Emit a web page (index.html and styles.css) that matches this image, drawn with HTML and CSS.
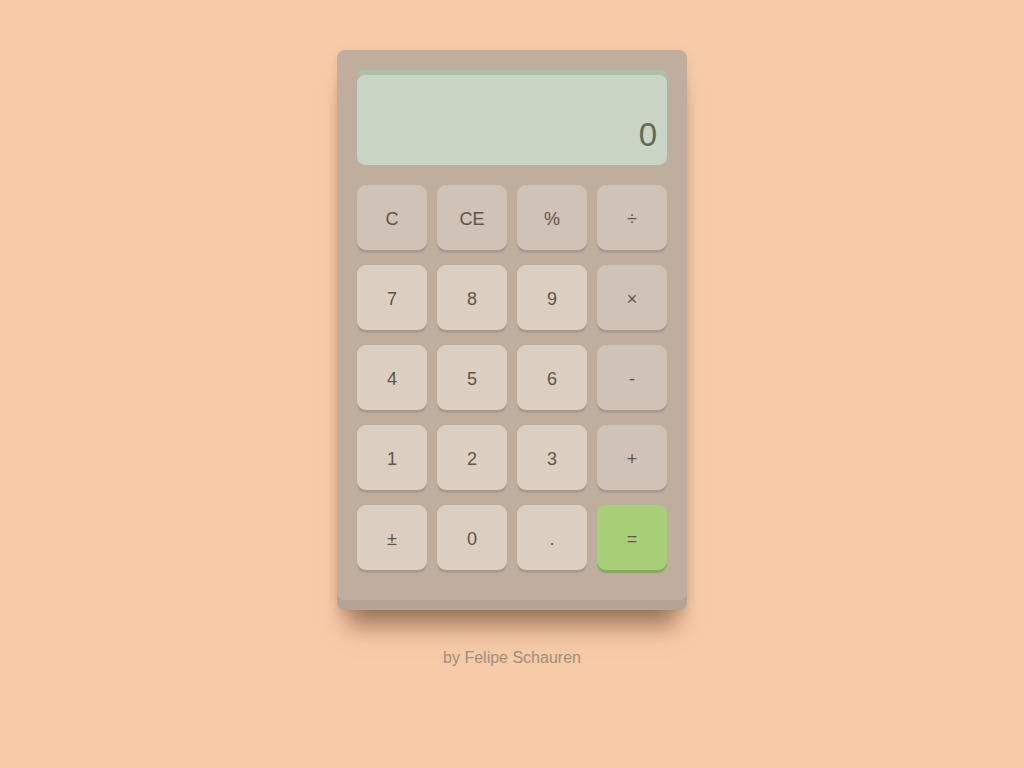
FILE: index.html
```html
<!DOCTYPE html>
<html lang="en">
<head>
<meta charset="utf-8">
<title>Calculator</title>
<link rel="stylesheet" href="styles.css">
</head>
<body>
<main class="page">
  <div class="calculator">
    <div class="display"><span class="display-value">0</span></div>
    <div class="keys">
      <button class="key op">C</button>
      <button class="key op">CE</button>
      <button class="key op">%</button>
      <button class="key op">÷</button>
      <button class="key">7</button>
      <button class="key">8</button>
      <button class="key">9</button>
      <button class="key op">×</button>
      <button class="key">4</button>
      <button class="key">5</button>
      <button class="key">6</button>
      <button class="key op">-</button>
      <button class="key">1</button>
      <button class="key">2</button>
      <button class="key">3</button>
      <button class="key op">+</button>
      <button class="key">±</button>
      <button class="key">0</button>
      <button class="key">.</button>
      <button class="key equals">=</button>
    </div>
  </div>
  <p class="credit">by Felipe Schauren</p>
</main>
</body>
</html>
```

FILE: styles.css
```css
html, body {
  margin: 0;
  padding: 0;
  background: #f7cba8;
  font-family: "Liberation Sans", Arial, sans-serif;
}

.page {
  display: flex;
  flex-direction: column;
  align-items: center;
  padding-top: 50px;
}

.calculator {
  width: 310px;
  padding: 20px 20px 40px;
  background: #bfae9e;
  border-radius: 8px;
  box-shadow: inset 0 -10px 0 rgba(90, 70, 50, 0.09), 0 26px 22px -10px rgba(105, 65, 40, 0.6), 0 2px 8px rgba(120, 85, 60, 0.15);
}

.display {
  height: 95px;
  box-sizing: border-box;
  background: #c8d4c4;
  border-radius: 8px;
  box-shadow: inset 0 5px 0 #abc0a8;
  display: flex;
  align-items: flex-end;
  justify-content: flex-end;
  padding: 0 10px 14px;
}

.display-value {
  font-size: 33px;
  line-height: 33px;
  color: #5e6c55;
}

.keys {
  margin-top: 20px;
  display: grid;
  grid-template-columns: repeat(4, 70px);
  grid-auto-rows: 65px;
  column-gap: 10px;
  row-gap: 15px;
}

.key {
  border: none;
  margin: 0;
  padding: 4px 0 0;
  border-radius: 9px;
  background: #dccfc1;
  color: #5e534b;
  font-family: "Liberation Sans", Arial, sans-serif;
  font-size: 18px;
  box-shadow: 0 3px 1px #a99a8d;
}

.key.op {
  background: #d0c2b6;
}

.key.equals {
  background: #a8cf78;
  box-shadow: 0 3px 1px #86a960;
}

.credit {
  margin: 39px 0 0;
  font-size: 16px;
  color: #a08d7d;
}
```
